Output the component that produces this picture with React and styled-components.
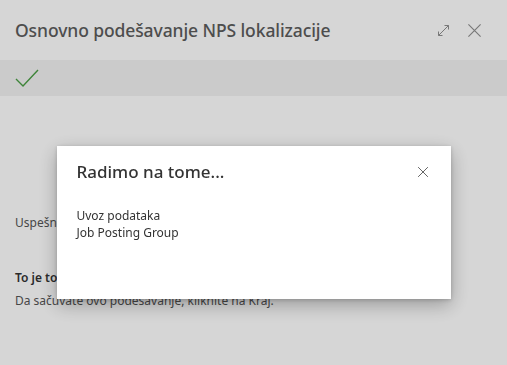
import React from 'react';
import styled, { createGlobalStyle } from 'styled-components';

const GlobalStyle = createGlobalStyle`
  html, body {
    margin: 0;
    padding: 0;
    background: #ffffff;
  }
  body {
    font-family: "Noto Sans", "Open Sans", sans-serif;
    width: 507px;
    height: 365px;
    overflow: hidden;
  }
`;

const Page = styled.div`
  width: 507px;
  height: 365px;
  background: #ffffff;
  display: flex;
  flex-direction: column;
`;

const Header = styled.div`
  height: 60px;
  display: flex;
  align-items: center;
  padding: 0 23px 0 15px;
  gap: 11px;
`;

const Title = styled.h1`
  flex: 1;
  margin: 0;
  font-size: 17.5px;
  font-weight: 500;
  color: #5c5c5c;
  letter-spacing: -0.1px;
`;

const IconButton = styled.button`
  border: 0;
  background: none;
  padding: 0;
  width: 20px;
  height: 20px;
  display: flex;
  align-items: center;
  justify-content: center;
  color: ${p => p.$color || '#8f8f8f'};
  cursor: pointer;
`;

const ActionBar = styled.div`
  height: 36px;
  background: #f2f2f2;
  display: flex;
  align-items: center;
  padding: 0 15px;
`;

const Content = styled.div`
  padding: 0 15px;
  display: flex;
  flex-direction: column;
  font-size: 12px;
  color: #555555;
`;

const Line = styled.p`
  margin: 0;
  line-height: 17px;
  font-weight: ${p => (p.$bold ? 600 : 400)};
  color: ${p => (p.$bold ? '#333333' : '#555555')};
  margin-top: ${p => p.$gap || 0}px;
`;

const Overlay = styled.div`
  position: fixed;
  inset: 0;
  background: rgba(0, 0, 0, 0.16);
  display: flex;
  justify-content: center;
  align-items: flex-start;
  padding-top: 146px;
`;

const Dialog = styled.div`
  width: 394px;
  height: 153px;
  box-sizing: border-box;
  background: #ffffff;
  box-shadow: 0 6px 18px rgba(0, 0, 0, 0.28), 0 1px 4px rgba(0, 0, 0, 0.18);
  padding: 14px 18px 0 20px;
  display: flex;
  flex-direction: column;
`;

const DialogHead = styled.div`
  display: flex;
  align-items: center;
  justify-content: space-between;
`;

const DialogTitle = styled.h2`
  margin: 0;
  font-size: 17px;
  font-weight: 500;
  color: #333333;
  line-height: 24px;
`;

const DialogBody = styled.div`
  margin-top: 23px;
  font-size: 12px;
  line-height: 17px;
  color: #333333;
`;

const Expand = () => (
  <svg width="13" height="13" viewBox="0 0 13 13" fill="none" stroke="currentColor" strokeWidth="1">
    <path d="M1.5 11.5 L11.5 1.5 M7.5 1.5 H11.5 V5.5 M1.5 7.5 V11.5 H5.5" />
  </svg>
);

const Close = ({ size = 16 }) => (
  <svg width={size} height={size} viewBox="0 0 16 16" fill="none" stroke="currentColor" strokeWidth="1.2">
    <path d="M1.5 1.5 L14.5 14.5 M14.5 1.5 L1.5 14.5" />
  </svg>
);

const Check = () => (
  <svg width="24" height="18" viewBox="0 0 24 18" fill="none" stroke="#4a9e44" strokeWidth="1.4">
    <path d="M1 10 L8 17 L23 1" />
  </svg>
);

export default function App() {
  return (
    <>
      <GlobalStyle />
      <Page>
        <Header>
          <Title>Osnovno podešavanje NPS lokalizacije</Title>
          <IconButton aria-label="Proširi"><Expand /></IconButton>
          <IconButton aria-label="Zatvori"><Close size={15} /></IconButton>
        </Header>
        <ActionBar>
          <Check />
        </ActionBar>
        <Content>
          <Line $gap={118}>Uspešno ste završili podešavanje NPS lokalizacije.</Line>
          <Line $bold $gap={38}>To je to!</Line>
          <Line $gap={6}>Da sačuvate ovo podešavanje, kliknite na Kraj.</Line>
        </Content>
      </Page>
      <Overlay>
        <Dialog role="dialog">
          <DialogHead>
            <DialogTitle>Radimo na tome...</DialogTitle>
            <IconButton $color="#555555" aria-label="Zatvori"><Close size={12} /></IconButton>
          </DialogHead>
          <DialogBody>
            <div>Uvoz podataka</div>
            <div>Job Posting Group</div>
          </DialogBody>
        </Dialog>
      </Overlay>
    </>
  );
}
